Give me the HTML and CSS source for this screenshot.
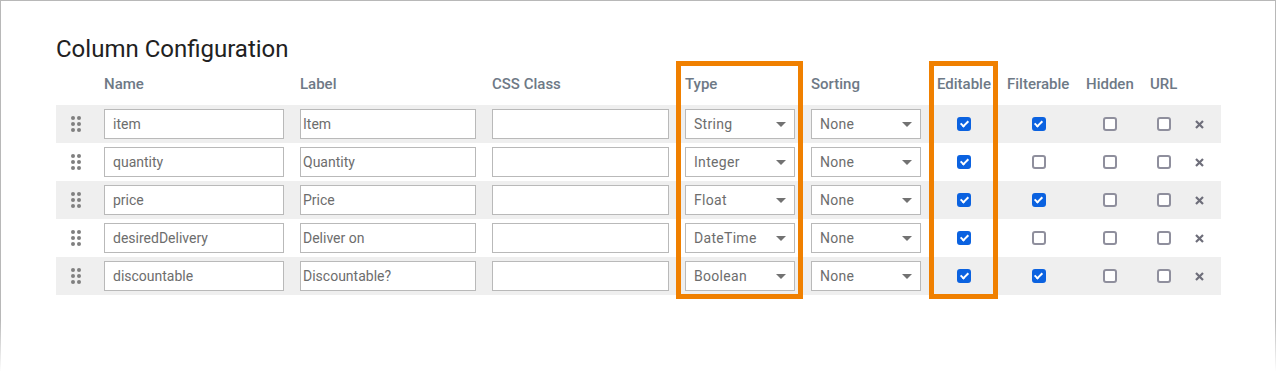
FILE: index.html
```html
<!DOCTYPE html>
<html lang="en">
<head>
    <meta charset="UTF-8">
    <meta name="viewport" content="width=device-width, initial-scale=1.0">
    <title>Column Configuration</title>
    <link rel="stylesheet" href="styles.css">
</head>
<body>
    <div class="frame">
        <h2 class="title">Column Configuration</h2>
        <div class="columns">
            <div class="row head">
                <span></span>
                <span>Name</span>
                <span>Label</span>
                <span>CSS Class</span>
                <span>Type</span>
                <span>Sorting</span>
                <span>Editable</span>
                <span>Filterable</span>
                <span>Hidden</span>
                <span>URL</span>
                <span></span>
            </div>

            <div class="row">
                <span class="handle"><i></i><i></i><i></i><i></i><i></i><i></i></span>
                <input class="field" type="text" value="item">
                <input class="field tight" type="text" value="Item">
                <input class="field" type="text" value="">
                <span class="select"><select><option>String</option></select></span>
                <span class="select"><select><option>None</option></select></span>
                <span class="cell"><input type="checkbox" checked></span>
                <span class="cell"><input type="checkbox" checked></span>
                <span class="cell"><input type="checkbox"></span>
                <span class="cell"><input type="checkbox"></span>
                <span class="cell remove"><svg width="9" height="9" viewBox="0 0 9 9"><path d="M1 1L8 8M8 1L1 8"/></svg></span>
            </div>

            <div class="row">
                <span class="handle"><i></i><i></i><i></i><i></i><i></i><i></i></span>
                <input class="field" type="text" value="quantity">
                <input class="field tight" type="text" value="Quantity">
                <input class="field" type="text" value="">
                <span class="select"><select><option>Integer</option></select></span>
                <span class="select"><select><option>None</option></select></span>
                <span class="cell"><input type="checkbox" checked></span>
                <span class="cell"><input type="checkbox"></span>
                <span class="cell"><input type="checkbox"></span>
                <span class="cell"><input type="checkbox"></span>
                <span class="cell remove"><svg width="9" height="9" viewBox="0 0 9 9"><path d="M1 1L8 8M8 1L1 8"/></svg></span>
            </div>

            <div class="row">
                <span class="handle"><i></i><i></i><i></i><i></i><i></i><i></i></span>
                <input class="field" type="text" value="price">
                <input class="field tight" type="text" value="Price">
                <input class="field" type="text" value="">
                <span class="select"><select><option>Float</option></select></span>
                <span class="select"><select><option>None</option></select></span>
                <span class="cell"><input type="checkbox" checked></span>
                <span class="cell"><input type="checkbox" checked></span>
                <span class="cell"><input type="checkbox"></span>
                <span class="cell"><input type="checkbox"></span>
                <span class="cell remove"><svg width="9" height="9" viewBox="0 0 9 9"><path d="M1 1L8 8M8 1L1 8"/></svg></span>
            </div>

            <div class="row">
                <span class="handle"><i></i><i></i><i></i><i></i><i></i><i></i></span>
                <input class="field" type="text" value="desiredDelivery">
                <input class="field tight" type="text" value="Deliver on">
                <input class="field" type="text" value="">
                <span class="select"><select><option>DateTime</option></select></span>
                <span class="select"><select><option>None</option></select></span>
                <span class="cell"><input type="checkbox" checked></span>
                <span class="cell"><input type="checkbox"></span>
                <span class="cell"><input type="checkbox"></span>
                <span class="cell"><input type="checkbox"></span>
                <span class="cell remove"><svg width="9" height="9" viewBox="0 0 9 9"><path d="M1 1L8 8M8 1L1 8"/></svg></span>
            </div>

            <div class="row">
                <span class="handle"><i></i><i></i><i></i><i></i><i></i><i></i></span>
                <input class="field" type="text" value="discountable">
                <input class="field tight" type="text" value="Discountable?">
                <input class="field" type="text" value="">
                <span class="select"><select><option>Boolean</option></select></span>
                <span class="select"><select><option>None</option></select></span>
                <span class="cell"><input type="checkbox" checked></span>
                <span class="cell"><input type="checkbox" checked></span>
                <span class="cell"><input type="checkbox"></span>
                <span class="cell"><input type="checkbox"></span>
                <span class="cell remove"><svg width="9" height="9" viewBox="0 0 9 9"><path d="M1 1L8 8M8 1L1 8"/></svg></span>
            </div>
        </div>

        <!-- highlight annotations -->
        <div class="mark mark-type"></div>
        <div class="mark mark-editable"></div>
    </div>
</body>
</html>
```

FILE: styles.css
```css
html, body {
    margin: 0;
    background: #fff;
}
body {
    font-family: Roboto, "Liberation Sans", sans-serif;
    overflow: hidden;
}
.frame {
    position: relative;
    width: 1276px;
    height: 371px;
    box-sizing: border-box;
    padding: 35px 0 0 55px;
    border: 1px solid #b8b8b8;
    border-bottom: 0;
    border-image: linear-gradient(to bottom, #b8b8b8 0, #b8b8b8 86%, #fff 100%) 1;
}
.title {
    margin: 0;
    font-size: 24px;
    line-height: 26px;
    font-weight: 400;
    color: #212121;
}
.columns {
    width: 1165px;
}
.row {
    display: grid;
    grid-template-columns: 32px 180px 176px 177px 110px 110px 54px 63px 48px 27px 12px;
    column-gap: 16px;
    align-items: center;
    height: 38px;
    padding-right: 16px;
}
.row:nth-child(even) {
    background: #efefef;
}
.row.head {
    height: auto;
    padding-top: 14px;
    padding-bottom: 13px;
    font-size: 15px;
    line-height: 16px;
    font-weight: 500;
    color: #6e7986;
    white-space: nowrap;
}
.handle {
    display: grid;
    grid-template-columns: 4px 4px;
    gap: 2px;
    margin-left: 15px;
}
.handle i {
    width: 4px;
    height: 4px;
    border-radius: 50%;
    background: #808080;
}
.field {
    height: 30px;
    box-sizing: border-box;
    margin: 0;
    padding: 0 8px;
    border: 1px solid #b9b9b9;
    background: #fff;
    font-family: inherit;
    font-size: 14px;
    color: #6d6d6d;
}
.field.tight {
    padding: 0 2px;
}
.select {
    position: relative;
    display: block;
}
.select select {
    width: 100%;
    height: 30px;
    margin: 0;
    padding: 0 0 0 8px;
    border: 1px solid #b9b9b9;
    border-radius: 0;
    background: #fff;
    appearance: none;
    font-family: inherit;
    font-size: 14px;
    letter-spacing: 0.3px;
    color: #6d6d6d;
}
.select::after {
    content: "";
    position: absolute;
    right: 9px;
    top: 13px;
    border-left: 5px solid transparent;
    border-right: 5px solid transparent;
    border-top: 5px solid #727272;
}
.cell {
    display: flex;
    justify-content: center;
    align-items: center;
}
.cell input[type="checkbox"] {
    position: relative;
    width: 14px;
    height: 14px;
    margin: 0;
    box-sizing: border-box;
    appearance: none;
    border: 2px solid #8f8f9d;
    border-radius: 3px;
    background: #fff;
}
.cell input[type="checkbox"]:checked {
    border-color: #0b62e0;
    background: #0b62e0;
}
.cell input[type="checkbox"]:checked::after {
    content: "";
    position: absolute;
    left: 2.5px;
    top: 0px;
    width: 3px;
    height: 6px;
    border-right: 2px solid #fff;
    border-bottom: 2px solid #fff;
    transform: rotate(45deg);
}
.remove svg {
    stroke: #6e6e7a;
    stroke-width: 2.2;
}
.mark {
    position: absolute;
    top: 60px;
    height: 238px;
    box-sizing: border-box;
    border: 5px solid #f08000;
    pointer-events: none;
}
.mark-type {
    left: 675px;
    width: 127px;
}
.mark-editable {
    left: 928px;
    width: 69px;
}
```
